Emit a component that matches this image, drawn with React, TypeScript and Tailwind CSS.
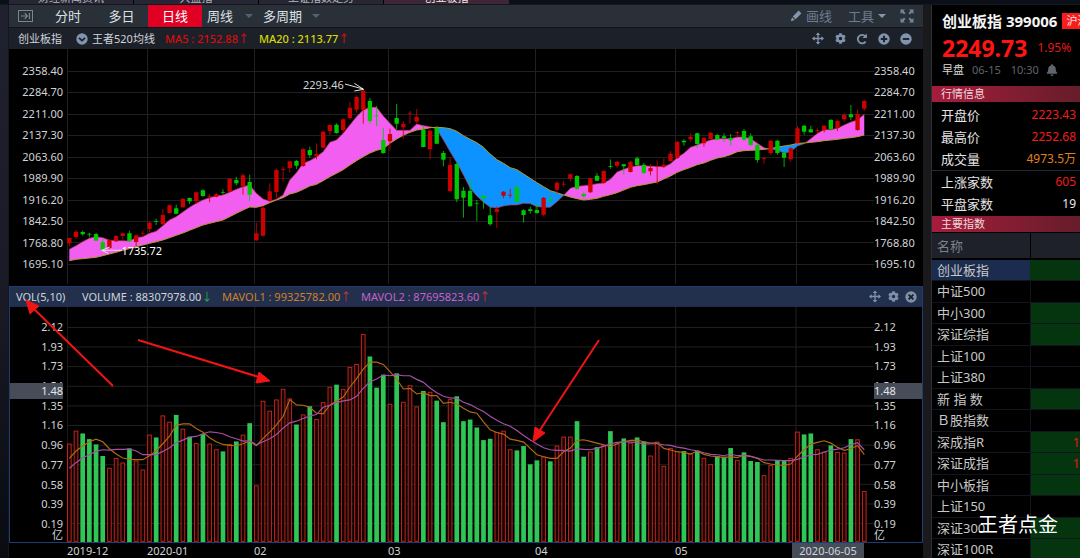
import React from "react";
import { FaBell, FaCog } from "react-icons/fa";

type Candle = ["r" | "g", number, number, number, number];

// Each candle: direction, high, body top, body bottom, low.
const candles: Candle[] = [
  ["r", 534, 534, 550, 560], ["r", 510, 515, 531, 537], ["g", 512, 516, 523, 527], ["g", 518, 521, 524, 532],
  ["g", 518, 522, 542, 543], ["g", 538, 547, 570, 572], ["r", 538, 540, 564, 566], ["r", 525, 528, 544, 546],
  ["r", 519, 520, 528, 538], ["g", 512, 520, 544, 545], ["r", 524, 526, 546, 560], ["r", 512, 518, 521, 530],
  ["r", 484, 488, 507, 516], ["g", 476, 483, 486, 495], ["r", 447, 465, 493, 495], ["r", 434, 436, 459, 460],
  ["g", 434, 445, 461, 463], ["r", 415, 416, 442, 443], ["g", 412, 414, 424, 432], ["r", 396, 397, 423, 432],
  ["g", 388, 391, 408, 411], ["r", 402, 408, 411, 427], ["r", 398, 402, 410, 412], ["g", 388, 396, 399, 404],
  ["r", 355, 356, 395, 396], ["g", 350, 360, 370, 376], ["r", 340, 346, 379, 404], ["g", 344, 366, 404, 423],
  ["r", 488, 520, 541, 543], ["r", 438, 443, 527, 529], ["r", 370, 394, 421, 424], ["r", 326, 330, 396, 415],
  ["r", 320, 326, 330, 365], ["r", 303, 304, 324, 338], ["g", 300, 303, 317, 327], ["r", 265, 267, 318, 321],
  ["g", 260, 270, 286, 293], ["r", 250, 282, 289, 298], ["r", 213, 215, 263, 264], ["r", 193, 195, 213, 225],
  ["g", 190, 194, 219, 221], ["r", 175, 178, 210, 219], ["r", 126, 143, 174, 179], ["r", 106, 111, 149, 158],
  ["r", 88, 92, 150, 191], ["g", 114, 123, 183, 190], ["g", 138, 166, 169, 198], ["g", 204, 240, 279, 281],
  ["r", 206, 222, 244, 272], ["g", 132, 174, 191, 208], ["r", 183, 192, 202, 236], ["r", 153, 158, 161, 190],
  ["r", 147, 171, 185, 190], ["g", 196, 210, 261, 262], ["r", 208, 212, 268, 298], ["g", 198, 204, 251, 252],
  ["g", 273, 279, 299, 319], ["r", 292, 315, 393, 395], ["g", 309, 312, 418, 426], ["g", 381, 392, 413, 473],
  ["g", 356, 392, 439, 440], ["g", 420, 429, 431, 483], ["g", 403, 407, 414, 446], ["g", 441, 466, 493, 497],
  ["r", 440, 446, 456, 504], ["r", 393, 395, 407, 415], ["r", 386, 404, 407, 415], ["g", 379, 381, 425, 426],
  ["g", 448, 451, 465, 488], ["g", 440, 448, 453, 461], ["g", 430, 450, 459, 461], ["r", 411, 413, 464, 469],
  ["g", 405, 418, 422, 429], ["r", 364, 368, 389, 400], ["r", 363, 371, 374, 380], ["r", 340, 343, 356, 364],
  ["g", 345, 348, 386, 390], ["g", 397, 402, 409, 413], ["r", 353, 355, 397, 399], ["g", 339, 347, 362, 363],
  ["r", 331, 333, 369, 371], ["g", 298, 318, 321, 326], ["r", 303, 305, 317, 323], ["g", 312, 313, 319, 343],
  ["r", 303, 305, 336, 338], ["g", 290, 295, 315, 317], ["g", 309, 314, 339, 341], ["r", 312, 324, 334, 346],
  ["r", 301, 318, 321, 372], ["r", 295, 314, 320, 323], ["r", 273, 281, 303, 305], ["r", 243, 245, 294, 297],
  ["g", 238, 242, 247, 257], ["r", 220, 230, 238, 245], ["g", 218, 220, 252, 263], ["r", 231, 234, 250, 260],
  ["r", 215, 218, 237, 238], ["g", 222, 225, 239, 240], ["g", 220, 229, 234, 246], ["g", 222, 234, 241, 257],
  ["r", 213, 216, 220, 232], ["g", 207, 213, 239, 242], ["g", 220, 229, 255, 258], ["g", 252, 255, 300, 308],
  ["r", 291, 294, 298, 311], ["r", 240, 242, 279, 285], ["g", 240, 242, 279, 284], ["g", 274, 279, 293, 321],
  ["r", 262, 265, 298, 305], ["r", 198, 205, 250, 251], ["g", 195, 197, 215, 224], ["g", 197, 208, 217, 219],
  ["r", 205, 210, 213, 221], ["r", 196, 197, 211, 217], ["g", 177, 180, 207, 212], ["r", 178, 183, 204, 213],
  ["r", 160, 164, 178, 186], ["g", 135, 163, 172, 181], ["r", 148, 162, 210, 213], ["r", 120, 123, 146, 153],
];

const ma5 = [
  568, 557, 545, 535, 530, 533, 541, 542, 542, 543, 533, 530, 520, 514, 497, 480, 470, 456, 442, 430,
  420, 413, 408, 405, 397, 388, 380, 375, 400, 417, 424, 418, 405, 360, 338, 310, 302, 291, 275, 247,
  240, 220, 195, 170, 150, 142, 142, 168, 190, 211, 211, 211, 192, 197, 200, 207, 240, 275, 308, 345,
  385, 408, 427, 442, 444, 438, 435, 435, 430, 431, 440, 442, 442, 425, 406, 385, 379, 377, 375, 371,
  369, 358, 336, 328, 321, 317, 317, 319, 319, 321, 311, 293, 280, 262, 255, 247, 240, 236, 236, 236,
  231, 231, 236, 250, 263, 268, 270, 280, 275, 258, 251, 236, 220, 209, 209, 205, 195, 186, 180, 163,
];

const ma20 = [
  602, 598, 596, 594, 592, 587, 582, 577, 571, 566, 560, 555, 550, 545, 540, 533, 526, 519, 511, 503,
  495, 490, 485, 480, 470, 460, 450, 441, 442, 437, 428, 420, 413, 402, 397, 388, 378, 373, 362, 350,
  340, 329, 315, 302, 290, 279, 271, 266, 250, 237, 226, 217, 210, 208, 203, 202, 203, 206, 214, 227,
  238, 248, 262, 282, 299, 310, 323, 329, 342, 355, 368, 380, 392, 398, 405, 411, 416, 420, 418, 415,
  409, 404, 398, 390, 382, 377, 374, 370, 366, 357, 348, 337, 329, 322, 314, 309, 301, 294, 290, 284,
  275, 272, 271, 270, 268, 266, 261, 258, 255, 250, 249, 247, 245, 242, 240, 238, 235, 233, 230, 225,
];

const volumes = [
  493, 454, 463, 480, 496, 531, 566, 536, 550, 508, 544, 571, 466, 475, 408, 427, 407, 448, 473, 491,
  465, 493, 510, 517, 494, 487, 466, 432, 619, 364, 394, 360, 328, 357, 436, 405, 381, 419, 368, 322,
  316, 328, 262, 253, 163, 231, 325, 286, 373, 282, 367, 317, 381, 335, 337, 364, 429, 359, 351, 426,
  421, 445, 483, 479, 458, 454, 510, 514, 501, 556, 544, 532, 547, 499, 472, 472, 426, 533, 517, 504,
  497, 456, 493, 478, 490, 475, 487, 529, 487, 560, 506, 516, 516, 523, 515, 536, 555, 531, 533, 507,
  542, 520, 546, 549, 588, 558, 543, 545, 536, 457, 466, 463, 510, 518, 499, 518, 520, 480, 480, 636,
];

const mavol1 = [
  537, 515, 500, 487, 479, 487, 508, 524, 536, 540, 541, 541, 529, 514, 493, 470, 437, 433, 433, 447,
  458, 475, 487, 495, 498, 499, 493, 485, 499, 477, 458, 436, 411, 360, 376, 377, 383, 401, 403, 377,
  364, 352, 322, 297, 268, 247, 247, 254, 276, 298, 328, 326, 343, 339, 348, 348, 371, 368, 373, 386,
  397, 401, 427, 451, 459, 464, 479, 483, 488, 507, 526, 532, 537, 537, 517, 506, 483, 481, 486, 491,
  496, 502, 493, 487, 483, 482, 487, 491, 490, 507, 512, 517, 519, 524, 515, 525, 530, 532, 535, 532,
  535, 527, 531, 537, 550, 554, 557, 558, 554, 530, 511, 494, 489, 484, 491, 504, 513, 508, 498, 526,
];

const mavol2 = [
  567, 550, 535, 526, 516, 511, 512, 510, 510, 509, 515, 526, 526, 526, 516, 505, 490, 482, 473, 471,
  463, 457, 459, 463, 472, 478, 485, 484, 496, 487, 478, 465, 446, 430, 425, 417, 409, 405, 383, 377,
  369, 364, 361, 350, 326, 306, 298, 286, 288, 285, 288, 288, 299, 308, 325, 339, 350, 355, 356, 368,
  375, 386, 396, 410, 422, 433, 440, 453, 468, 482, 494, 505, 511, 513, 513, 515, 508, 510, 511, 506,
  501, 493, 489, 487, 488, 489, 494, 493, 493, 496, 498, 503, 506, 511, 514, 520, 525, 526, 529, 524,
  529, 529, 531, 536, 542, 542, 543, 544, 544, 540, 533, 526, 525, 518, 512, 509, 505, 496, 490, 511,
];

const xAt = (i: number) => 7 + i * 20.04;
const linePoints = (series: number[]) => series.map((y, i) => `${xAt(i)},${y}`).join(" ");

type Band = { above: boolean; points: string };

// Splits the area between two lines into bands wherever the lines cross.
function bandsBetween(fast: number[], slow: number[]): Band[] {
  const bands: Band[] = [];
  let top: string[] = [];
  let bottom: string[] = [];
  let above = fast[0] < slow[0];
  const close = () => bands.push({ above, points: [...top, ...[...bottom].reverse()].join(" ") });
  fast.forEach((f, i) => {
    const s = slow[i];
    if (i > 0 && f < s !== above) {
      const before = slow[i - 1] - fast[i - 1];
      const t = before / (before - (s - f));
      const cx = xAt(i - 1 + t);
      const cy = fast[i - 1] + (f - fast[i - 1]) * t;
      top.push(`${cx},${cy}`);
      close();
      top = [`${cx},${cy}`];
      bottom = [];
      above = f < s;
    }
    top.push(`${xAt(i)},${f}`);
    bottom.push(`${xAt(i)},${s}`);
  });
  close();
  return bands;
}

const monthLines = [1, 241, 563, 964, 1404, 1826, 2187];
const priceTicks = ["2358.40", "2284.70", "2211.00", "2137.30", "2063.60", "1989.90", "1916.20", "1842.50", "1768.80", "1695.10"];
const volumeTicks = ["2.12", "1.93", "1.73", "1.54", "1.35", "1.16", "0.96", "0.77", "0.58", "0.39", "0.19"];

function Grid({ count, first, step, top, bottom }: { count: number; first: number; step: number; top: number; bottom: number }) {
  return (
    <g stroke="#202022" strokeWidth="1" shapeRendering="crispEdges">
      {Array.from({ length: count }, (_, i) => (
        <line key={i} x1="0" x2="2421" y1={first + i * step} y2={first + i * step} vectorEffect="non-scaling-stroke" />
      ))}
      {monthLines.map((x) => (
        <line key={x} x1={x} x2={x} y1={top} y2={bottom} vectorEffect="non-scaling-stroke" />
      ))}
    </g>
  );
}

function PricePlot() {
  return (
    <svg className="block h-full w-full" viewBox="0 -33 2421 711" preserveAspectRatio="none" aria-label="K线图">
      <Grid count={10} first={34.5} step={64.3} top={-33} bottom={672} />
      {bandsBetween(ma5, ma20).map((b, i) => (
        <polygon key={i} points={b.points} fill={b.above ? "#f25ff0" : "#0c93ff"} />
      ))}
      <polyline points={linePoints(ma5)} fill="none" stroke="#c03050" strokeWidth="2" />
      <polyline points={linePoints(ma20)} fill="none" stroke="#b59a2c" strokeWidth="3" />
      {candles.map(([dir, high, top, bottom, low], i) => {
        const color = dir === "r" ? "#cc0000" : "#00c800";
        const thin = bottom - top < 5;
        return (
          <g key={i} fill={color}>
            <rect x={xAt(i) - 1.5} y={high} width="3" height={low - high} opacity="0.85" />
            <rect x={xAt(i) - 6.5} y={top} width="13" height={bottom - top} rx="1" opacity={thin ? 0.75 : 1} />
          </g>
        );
      })}
      <g stroke="#e4e4e4" strokeWidth="3" fill="none">
        <path d="M834 72L888 87M862 70L890 88L862 93" />
        <path d="M165 571H104M128 561L104 571L124 580" />
      </g>
    </svg>
  );
}

function VolumePlot() {
  return (
    <svg className="block h-full w-full" viewBox="0 81 2421 708" preserveAspectRatio="none" aria-label="成交量图">
      <Grid count={11} first={142.5} step={59.1} top={81} bottom={789} />
      {volumes.map((y, i) =>
        candles[i][0] === "r" ? (
          <rect key={i} x={xAt(i) - 5.5} y={y + 1} width="11" height={786 - y} fill="#160202" stroke="#bf241c" strokeWidth="3" />
        ) : (
          <rect key={i} x={xAt(i) - 7} y={y - 1} width="14" height={790 - y} fill="#2fc655" />
        ),
      )}
      <polyline points={linePoints(mavol1)} fill="none" stroke="#b06a14" strokeWidth="3.5" />
      <polyline points={linePoints(mavol2)} fill="none" stroke="#a850a8" strokeWidth="3.5" />
    </svg>
  );
}

function Ticks({ values, side }: { values: string[]; side: "left" | "right" }) {
  return (
    <div
      className={
        side === "left"
          ? "flex h-full flex-col justify-between pr-1 text-right"
          : "flex h-full flex-col justify-between text-left"
      }
    >
      {values.map((v) => (
        <span key={v}>{v}</span>
      ))}
    </div>
  );
}

function MoveIcon() {
  return (
    <svg className="size-[13px]" viewBox="0 0 12 12" fill="none" stroke="currentColor" strokeWidth="1.3">
      <path d="M6 1V11M1 6H11" />
      <path d="M6 0L8.3 2.6H3.7ZM6 12L8.3 9.4H3.7ZM0 6L2.6 3.7V8.3ZM12 6L9.4 3.7V8.3Z" fill="currentColor" stroke="none" />
    </svg>
  );
}

function DiscIcon({ mark }: { mark: string }) {
  return (
    <svg className="size-3" viewBox="0 0 12 12">
      <circle cx="6" cy="6" r="5.7" fill="currentColor" />
      <path d={mark} fill="none" stroke="#1c2029" strokeWidth="1.9" />
    </svg>
  );
}

function RefreshIcon() {
  return (
    <svg className="size-3" viewBox="0 0 12 12" fill="none" stroke="currentColor" strokeWidth="1.8">
      <path d="M9.6 8.6A4.3 4.3 0 1 1 9.3 3.2" />
      <path d="M10.9 0.6V5H6.5Z" fill="currentColor" stroke="none" />
    </svg>
  );
}

function Caret() {
  return (
    <svg className="h-1 w-2" viewBox="0 0 8 4" fill="currentColor">
      <path d="M0 0H8L4 4Z" />
    </svg>
  );
}

function IconButton({ label, children }: { label: string; children: React.ReactNode }) {
  return (
    <button type="button" aria-label={label} className="flex size-3 items-center justify-center">
      {children}
    </button>
  );
}

function TopTabs() {
  return (
    <div className="flex h-[5px] items-end overflow-hidden border-b border-[#15171c] bg-[#0a0f18] pl-[9px] text-[11px] leading-[12px] text-[#b4b4bc]">
      {["财经新闻资讯", "大盘指", "上证指数走势"].map((t) => (
        <span key={t} className="flex h-full w-[125px] items-end justify-center border-r border-black bg-[#262635]">
          {t}
        </span>
      ))}
      <span className="flex h-full w-[125px] items-end justify-center bg-[#3c2637] text-[#f0e8ec]">创业板指</span>
    </div>
  );
}

function Toolbar() {
  return (
    <div className="flex h-[23px] items-center border-b border-[#111317] bg-[#2a3038] text-[13px] leading-[18px] text-[#dce0e6]">
      <button type="button" aria-label="收起" className="ml-[9px] mr-2 text-[#7c8490]">
        <svg className="h-3 w-[15px]" viewBox="0 0 15 12" fill="none" stroke="currentColor">
          <rect x="0.5" y="0.5" width="14" height="11" />
          <path d="M3 6H9M6.8 3.2L9.4 6L6.8 8.8M11.5 3V9" strokeWidth="1.2" />
        </svg>
      </button>
      <button type="button" className="w-[54px]">分时</button>
      <button type="button" className="w-[53px]">多日</button>
      <button type="button" className="h-full w-[54px] bg-[#e00024] text-white">日线</button>
      <button type="button" className="ml-[5px] flex items-center gap-3">
        周线<span className="text-[#566070]"><Caret /></span>
      </button>
      <button type="button" className="ml-[10px] flex items-center gap-[10px]">
        多周期<span className="text-[#566070]"><Caret /></span>
      </button>
      <div className="ml-auto flex items-center pr-[9px] text-[#6c7c92]">
        <button type="button" className="flex items-center gap-1">
          <svg className="size-3" viewBox="0 0 12 12" fill="#8496ac">
            <path d="M8.6 0.6L11.4 3.4L5.6 9.2L2.8 6.4ZM2 7.2L4.8 10L0.8 11.2Z" />
          </svg>
          画线
        </button>
        <button type="button" className="ml-4 flex items-center gap-1">
          工具<span className="text-[#8496ac]"><Caret /></span>
        </button>
        <button type="button" aria-label="全屏" className="ml-[14px] text-[#73869c]">
          <svg className="size-[14px]" viewBox="0 0 14 14" fill="currentColor">
            <path d="M0.5 0.5H5L3.5 2L5.5 4L4 5.5L2 3.5L0.5 5ZM13.5 0.5V5L12 3.5L10 5.5L8.5 4L10.5 2L9 0.5ZM0.5 13.5V9L2 10.5L4 8.5L5.5 10L3.5 12L5 13.5ZM13.5 13.5H9L10.5 12L8.5 10L10 8.5L12 10.5L13.5 9Z" />
          </svg>
        </button>
      </div>
    </div>
  );
}

function IndicatorBar() {
  return (
    <div className="flex h-[21px] items-center bg-[#1c2029] pl-[9px] text-[#d0d4da]">
      <span>创业板指</span>
      <button type="button" className="ml-[14px] flex items-center gap-1">
        <svg className="size-3 text-[#8294ad]" viewBox="0 0 12 12">
          <circle cx="6" cy="6" r="5.7" fill="currentColor" />
          <path d="M3 4.8L6 7.6L9 4.8" fill="none" stroke="#1c2029" strokeWidth="1.8" />
        </svg>
        王者520均线
      </button>
      <span className="ml-[10px] font-medium text-[#d80c0c]">MA5 : 2152.88↑</span>
      <span className="ml-[10px] font-medium text-[#d8d800]">
        MA20 : 2113.77<span className="text-[#d80c0c]">↑</span>
      </span>
      <div className="ml-auto flex items-center gap-[10px] pr-[11px] text-[#8294ad]">
        <IconButton label="移动"><MoveIcon /></IconButton>
        <IconButton label="设置"><FaCog className="size-[11px]" /></IconButton>
        <IconButton label="刷新"><RefreshIcon /></IconButton>
        <IconButton label="放大"><DiscIcon mark="M6 2.8V9.2M2.8 6H9.2" /></IconButton>
        <IconButton label="缩小"><DiscIcon mark="M2.8 6H9.2" /></IconButton>
      </div>
    </div>
  );
}

function PricePanel() {
  return (
    <div className="flex h-[237px]">
      <div className="w-[58px] py-[14px]"><Ticks values={priceTicks} side="left" /></div>
      <div className="relative min-w-0 flex-1">
        <PricePlot />
        <span className="absolute left-[29%] top-[28px] pl-[2px]">2293.46</span>
        <span className="absolute left-[6.5%] top-[194px] pl-[2px] text-white">1735.72</span>
      </div>
      <div className="w-[49px] py-[14px]"><Ticks values={priceTicks} side="right" /></div>
    </div>
  );
}

function VolumePanel() {
  return (
    <div className="relative border border-[#1f3c74]">
      <div className="flex h-5 items-center border-b border-[#1b2c50] bg-[#22304e] pl-[6px]">
        <span className="w-[66px]">VOL(5,10)</span>
        <span className="w-[140px]">VOLUME : 88307978.00<span className="text-[#20b050]">↓</span></span>
        <span className="w-[139px] text-[#d08028]">MAVOL1 : 99325782.00<span className="text-[#d83030]">↑</span></span>
        <span className="text-[#c860c8]">MAVOL2 : 87695823.60<span className="text-[#d83030]">↑</span></span>
        <div className="ml-auto flex items-center gap-[6px] pr-[5px] text-[#8090a8]">
          <IconButton label="移动"><MoveIcon /></IconButton>
          <IconButton label="设置"><FaCog className="size-[11px]" /></IconButton>
          <IconButton label="关闭"><DiscIcon mark="M3.6 3.6L8.4 8.4M8.4 3.6L3.6 8.4" /></IconButton>
        </div>
      </div>
      <div className="flex h-[235px]">
        <div className="relative w-[57px] pb-[10px] pt-3">
          <Ticks values={volumeTicks} side="left" />
          <span className="absolute bottom-0 right-1 leading-[14px]">亿</span>
          <span className="absolute left-0 right-1 top-[76px] bg-[#474d58] text-right text-[#e4e8ec]">1.48</span>
        </div>
        <div className="min-w-0 flex-1"><VolumePlot /></div>
        <div className="relative w-[48px] pb-[10px] pt-3">
          <Ticks values={volumeTicks} side="right" />
          <span className="absolute bottom-0 left-0 leading-[14px]">亿</span>
          <span className="absolute left-0 right-0 top-[76px] bg-[#474d58] text-[#e4e8ec]">1.48</span>
        </div>
      </div>
      <svg className="pointer-events-none absolute inset-0 h-full w-full" viewBox="0 0 912 255" preserveAspectRatio="none">
        <g stroke="#f01414" strokeWidth="2" fill="#f01414">
          <path d="M103 99L23 21" />
          <path d="M16 13L29 19L20 27Z" strokeWidth="1" />
          <path d="M128 53L249 90" />
          <path d="M260 94L249 85L246 96Z" strokeWidth="1" />
          <path d="M589 53L530 143" />
          <path d="M523 155L525 140L535 146Z" strokeWidth="1" />
        </g>
      </svg>
    </div>
  );
}

function TimeAxis() {
  return (
    <div className="flex h-[15px] pl-[58px] pr-[49px] leading-[15px]">
      <div className="grid flex-1 grid-cols-[80fr_107fr_134fr_147fr_140fr_117fr_72fr_10fr]">
        <span>2019-12</span>
        <span>2020-01</span>
        <span>02</span>
        <span>03</span>
        <span>04</span>
        <span>05</span>
        <span className="bg-[#474d58] text-center">2020-06-05</span>
      </div>
    </div>
  );
}

const quoteRows = [
  { name: "开盘价", value: "2223.43", tone: "text-[#f01c1c]" },
  { name: "最高价", value: "2252.68", tone: "text-[#f01c1c]" },
  { name: "成交量", value: "4973.5万", tone: "text-[#e08018]" },
  { name: "上涨家数", value: "605", tone: "text-[#f01c1c]" },
  { name: "平盘家数", value: "19", tone: "text-[#e8e8e8]" },
];

const indexRows = [
  { name: "创业板指", on: true, value: "" },
  { name: "中证500", on: false, value: "" },
  { name: "中小300", on: true, value: "" },
  { name: "深证综指", on: true, value: "" },
  { name: "上证100", on: false, value: "" },
  { name: "上证380", on: false, value: "" },
  { name: "新 指 数", on: true, value: "" },
  { name: "Ｂ股指数", on: false, value: "" },
  { name: "深成指R", on: true, value: "1" },
  { name: "深证成指", on: true, value: "1" },
  { name: "中小板指", on: true, value: "" },
  { name: "上证150", on: false, value: "" },
  { name: "深证300", on: true, value: "" },
  { name: "深证100R", on: true, value: "" },
];

function SectionTitle({ children }: { children: React.ReactNode }) {
  return (
    <h2 className="h-4 bg-linear-to-r from-[#a61c3c] to-[#661c2a] pl-[9px] text-[11px] leading-4 text-[#f0d8dc]">{children}</h2>
  );
}

function Sidebar() {
  return (
    <aside className="relative w-[148px] shrink-0 overflow-hidden bg-black">
      <div className="flex h-[31px] items-center gap-[5px] whitespace-nowrap pl-[10px] text-[15px] font-bold text-[#f4f4f4]">
        <h1>创业板指 399006</h1>
        <span className="bg-[#f81c1c] px-1 text-[11px] font-normal leading-4 text-[#ffe0e0]">沪深</span>
      </div>
      <div className="flex h-6 items-center gap-[10px] pl-[10px]">
        <strong className="text-[23px] leading-6 text-[#ff1414]">2249.73</strong>
        <span className="text-[12px] text-[#e41818]">1.95%</span>
      </div>
      <div className="flex h-[26px] items-start pl-[10px] pt-[2px] text-[#60646c]">
        <span className="text-[#d8d8d8]">早盘</span>
        <span className="ml-2">06-15</span>
        <span className="ml-[10px]">10:30</span>
        <FaBell className="ml-[7px] mt-[2px] size-3" />
      </div>
      <SectionTitle>行情信息</SectionTitle>
      <dl className="pt-[2px] pb-px text-[13px]">
        {quoteRows.map((r, i) => (
          <div
            key={r.name}
            className={
              i === 2
                ? "flex h-[23px] items-center justify-between border-b border-[#262834] pl-[9px] pr-1"
                : "flex h-[22px] items-center justify-between pl-[9px] pr-1"
            }
          >
            <dt className="text-[#e4e4e4]">{r.name}</dt>
            <dd className={`text-[12px] ${r.tone}`}>{r.value}</dd>
          </div>
        ))}
      </dl>
      <SectionTitle>主要指数</SectionTitle>
      <table className="mt-px w-full table-fixed border-collapse text-[13px] text-[#c8c8c8]">
        <colgroup>
          <col className="w-[98px]" />
          <col />
        </colgroup>
        <thead>
          <tr className="h-[26px] border-b-2 border-black bg-[#1e202a]">
            <th scope="col" className="border-r border-black p-0 pl-[5px] text-left font-normal text-[#7c8088]">名称</th>
            <th scope="col" aria-label="现价" className="p-0" />
          </tr>
        </thead>
        <tbody>
          {indexRows.map((r, i) => (
            <tr key={r.name} className="border-b border-[#12151f] odd:h-[21px] even:h-[22px]">
              <td className={i === 0 ? "whitespace-nowrap bg-[#1c2c4e] p-0 pl-[5px]" : "whitespace-nowrap border-r border-[#12151f] p-0 pl-[5px]"}>
                {r.name}
              </td>
              <td className={r.on ? "bg-[#04350f] p-0 text-right text-[#e01818]" : "p-0"}>{r.value}</td>
            </tr>
          ))}
        </tbody>
      </table>
      <span className="absolute bottom-[24px] right-[22px] text-[20px] leading-6 text-white">王者点金</span>
    </aside>
  );
}

export default function App() {
  return (
    <div className="min-h-screen overflow-hidden bg-black font-['Noto_Sans','Noto_Sans_CJK_SC',sans-serif] text-[11px] leading-4 text-[#d0d4d8]">
      <TopTabs />
      <div className="flex">
        <div className="w-[9px] shrink-0 border-r border-[#14161c] bg-linear-to-b from-[#20212e] via-[#1a1b26] to-[#090b11]" />
        <main className="min-w-0 flex-1">
          <Toolbar />
          <IndicatorBar />
          <PricePanel />
          <VolumePanel />
          <TimeAxis />
        </main>
        <div className="w-[9px] shrink-0 border-r border-[#2c2e33] bg-[#1a1a1c]" />
        <Sidebar />
      </div>
    </div>
  );
}
